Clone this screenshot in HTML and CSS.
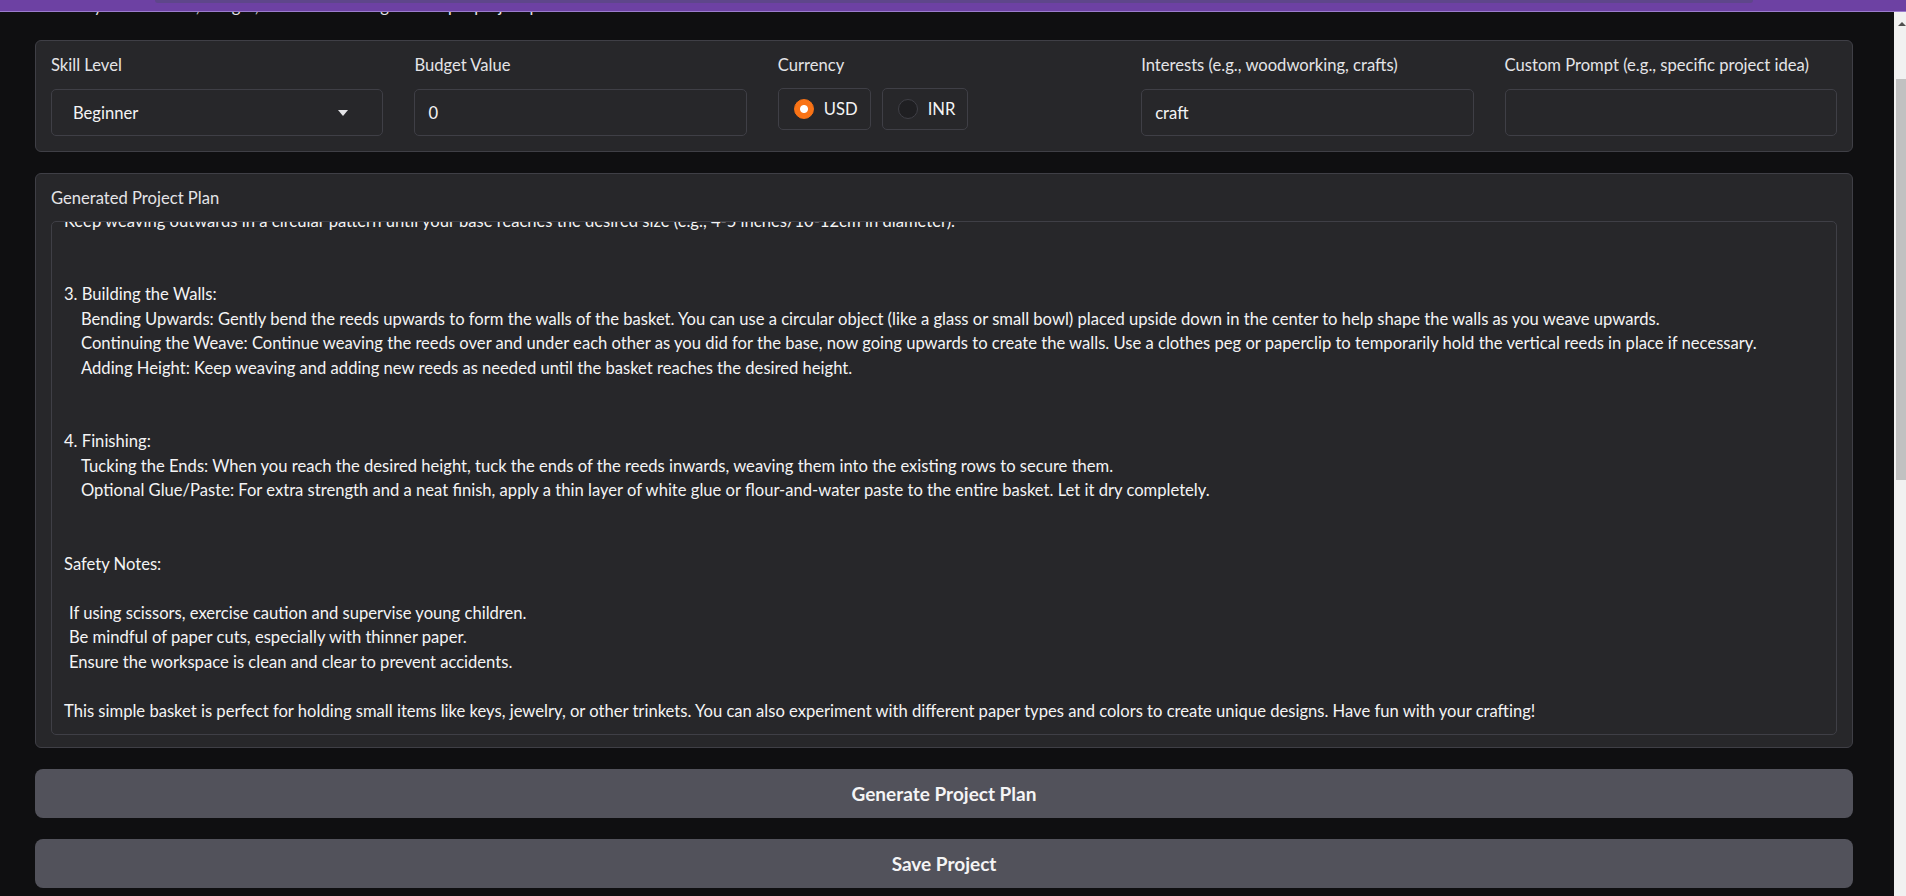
FILE: index.html
```html
<!DOCTYPE html>
<html lang="en">
<head>
<meta charset="utf-8">
<title>DIY Project Planner</title>
<link rel="stylesheet" href="styles.css">
</head>
<body>
<div class="topbar"><div class="topbar-tab"></div></div>
<div class="scrollbar">
  <div class="sb-arrow"></div>
  <div class="sb-thumb"></div>
</div>
<main class="page">
  <p class="intro">Enter your skill level, budget, and interests to get a unique project plan.</p>

  <section class="panel inputs-panel">
    <div class="field">
      <label class="label">Skill Level</label>
      <div class="control dropdown">
        <span>Beginner</span>
        <svg class="caret" width="10" height="6" viewBox="0 0 10 6"><path d="M0 0 L10 0 L5 6 Z" fill="#e4e4e7"/></svg>
      </div>
    </div>
    <div class="field">
      <label class="label">Budget Value</label>
      <div class="control textbox">0</div>
    </div>
    <div class="field">
      <label class="label">Currency</label>
      <div class="radios">
        <div class="radio checked"><span class="dot"></span><span>USD</span></div>
        <div class="radio"><span class="dot"></span><span>INR</span></div>
      </div>
    </div>
    <div class="field">
      <label class="label">Interests (e.g., woodworking, crafts)</label>
      <div class="control textbox">craft</div>
    </div>
    <div class="field">
      <label class="label">Custom Prompt (e.g., specific project idea)</label>
      <div class="control textbox"></div>
    </div>
  </section>

  <section class="panel output-panel">
    <label class="label">Generated Project Plan</label>
    <div class="textarea">
      <div class="text">
        <div class="ln">Keep weaving outwards in a circular pattern until your base reaches the desired size (e.g., 4-5 inches/10-12cm in diameter).</div>
        <div class="ln"></div>
        <div class="ln"></div>
        <div class="ln">3. Building the Walls:</div>
        <div class="ln ind">Bending Upwards: Gently bend the reeds upwards to form the walls of the basket. You can use a circular object (like a glass or small bowl) placed upside down in the center to help shape the walls as you weave upwards.</div>
        <div class="ln ind">Continuing the Weave: Continue weaving the reeds over and under each other as you did for the base, now going upwards to create the walls. Use a clothes peg or paperclip to temporarily hold the vertical reeds in place if necessary.</div>
        <div class="ln ind">Adding Height: Keep weaving and adding new reeds as needed until the basket reaches the desired height.</div>
        <div class="ln"></div>
        <div class="ln"></div>
        <div class="ln">4. Finishing:</div>
        <div class="ln ind">Tucking the Ends: When you reach the desired height, tuck the ends of the reeds inwards, weaving them into the existing rows to secure them.</div>
        <div class="ln ind">Optional Glue/Paste: For extra strength and a neat finish, apply a thin layer of white glue or flour-and-water paste to the entire basket. Let it dry completely.</div>
        <div class="ln"></div>
        <div class="ln"></div>
        <div class="ln">Safety Notes:</div>
        <div class="ln"></div>
        <div class="ln sp">If using scissors, exercise caution and supervise young children.</div>
        <div class="ln sp">Be mindful of paper cuts, especially with thinner paper.</div>
        <div class="ln sp">Ensure the workspace is clean and clear to prevent accidents.</div>
        <div class="ln"></div>
        <div class="ln">This simple basket is perfect for holding small items like keys, jewelry, or other trinkets. You can also experiment with different paper types and colors to create unique designs. Have fun with your crafting!</div>
      </div>
    </div>
  </section>

  <button class="btn">Generate Project Plan</button>
  <button class="btn">Save Project</button>
</main>
</body>
</html>
```

FILE: styles.css
```css
* { box-sizing: border-box; }

html, body {
  margin: 0;
  padding: 0;
  height: 896px;
  overflow: hidden;
}

body {
  background: #0f0f11;
  color: #f4f4f5;
  font-family: Lato, "Noto Sans", sans-serif;
  font-size: 16.6px;
  position: relative;
}

.topbar {
  position: absolute;
  top: 0;
  left: 0;
  right: 0;
  height: 12px;
  background: #6d41a3;
  border-bottom: 1px solid #9a7ccc;
  z-index: 5;
}

.topbar-tab {
  position: absolute;
  top: 0;
  left: 155px;
  width: 1598px;
  height: 3px;
  background: #5e468a;
  border-bottom-left-radius: 4px;
  border-bottom-right-radius: 4px;
}

.scrollbar {
  position: absolute;
  top: 12px;
  right: 0;
  bottom: 0;
  width: 12px;
  background: #f1f1f1;
  z-index: 4;
}

.sb-arrow {
  position: absolute;
  top: 10px;
  left: 4px;
  width: 0;
  height: 0;
  border-left: 4px solid transparent;
  border-right: 4px solid transparent;
  border-bottom: 4px solid #505050;
}

.sb-thumb {
  position: absolute;
  top: 67px;
  left: 2px;
  right: 0;
  height: 401px;
  background: #c1c1c1;
}

.page {
  display: flex;
  flex-direction: column;
  gap: 21px;
  padding: 0 53px 0 35px;
}

.intro {
  margin: -6px 0 0 16px;
  height: 25px;
  line-height: 24px;
  color: #e4e4e7;
  white-space: nowrap;
  overflow: hidden;
}

.panel {
  background: #27272a;
  border: 1px solid #3f3f46;
  border-radius: 6px;
}

.inputs-panel {
  height: 112px;
  padding: 13px 15px 15px 15px;
  display: grid;
  grid-template-columns: repeat(5, 1fr);
  column-gap: 31px;
}

.label {
  display: block;
  height: 22px;
  line-height: 22px;
  font-size: 16.6px;
  color: #e4e4e7;
  white-space: nowrap;
}

.field .label {
  margin-bottom: 13px;
}

.control {
  height: 47px;
  border: 1px solid #3f3f46;
  border-radius: 5px;
  background: #27272a;
  color: #f4f4f5;
  display: flex;
  align-items: center;
  font-size: 16.6px;
}

.dropdown {
  padding: 0 32px 0 21px;
  justify-content: space-between;
}

.caret { margin-right: 2px; }

.textbox {
  padding: 0 13px;
}

.radios {
  display: flex;
  gap: 11px;
  margin-top: -1px;
}

.radio {
  height: 42px;
  border: 1px solid #3f3f46;
  border-radius: 5px;
  display: flex;
  align-items: center;
  gap: 10px;
  padding: 0 12px 0 15px;
  font-size: 16.6px;
}

.dot {
  width: 20px;
  height: 20px;
  border-radius: 50%;
  border: 1px solid #3f3f46;
  background: #1f1f22;
  flex: none;
}

.radio.checked .dot {
  border-color: #f97316;
  background: radial-gradient(circle, #ffffff 0 3.5px, #f97316 4.5px);
}

.output-panel {
  height: 575px;
  padding: 13px 15px 12px 15px;
}

.output-panel .label {
  margin-bottom: 12px;
}

.textarea {
  height: 514px;
  border: 1px solid #3f3f46;
  border-radius: 5px;
  background: #27272a;
  overflow: hidden;
  padding: 0 12px;
}

.text {
  margin-top: -13.5px;
  line-height: 24.5px;
  font-size: 16.6px;
  color: #f4f4f5;
}

.ln {
  height: 24.5px;
  white-space: nowrap;
}

.ind { padding-left: 17px; }
.sp { padding-left: 5px; }

.btn {
  height: 49px;
  border: none;
  border-radius: 8px;
  background: #52525b;
  color: #f4f4f5;
  font-family: Lato, "Noto Sans", sans-serif;
  font-size: 19px;
  font-weight: 700;
  cursor: pointer;
}
```
